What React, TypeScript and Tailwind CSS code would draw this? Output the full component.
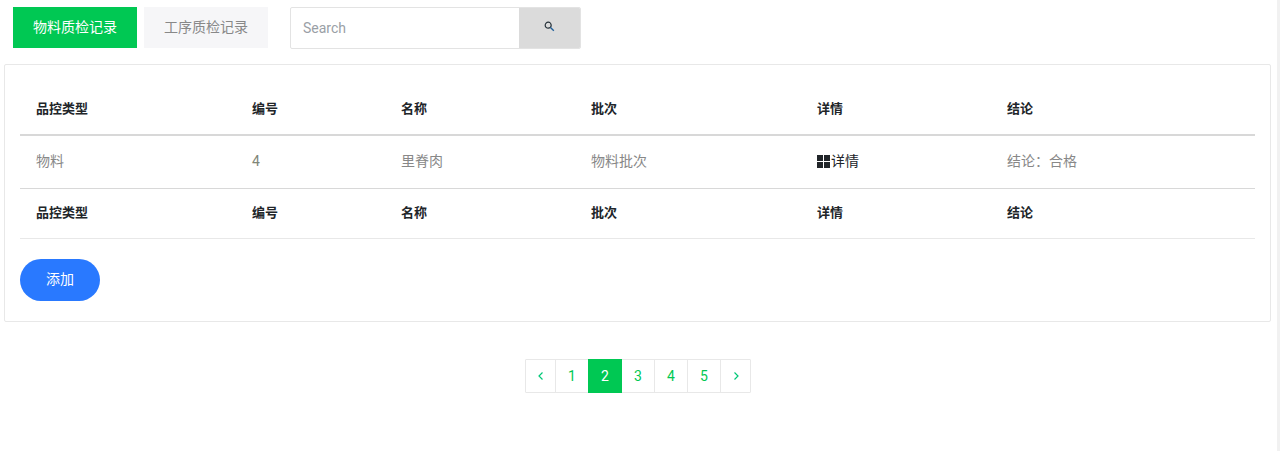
import React from "react";

const font = { fontFamily: 'Roboto, "Noto Sans CJK SC", sans-serif' };
const cols = ["w-[216px]", "w-[149px]", "w-[190px]", "w-[226px]", "w-[190px]", "w-[264px]"];
const heads = ["品控类型", "编号", "名称", "批次", "详情", "结论"];

function HeadRow({ border, height }: { border: string; height: string }) {
  return (
    <tr className={border}>
      {heads.map((h) => (
        <th key={h} className={`${height} p-0 pl-4 text-left align-middle text-[13px] font-bold text-[#212529]`}>
          {h}
        </th>
      ))}
    </tr>
  );
}

export default function App() {
  return (
    <div className="relative h-[451px] w-[1280px] overflow-hidden bg-white" style={font}>
      <div className="absolute right-0 top-0 h-full w-[3px] bg-[#f1f1f1]" />
      <div className="flex items-start pl-[13px] pt-[7px]">
        <button className="h-[41px] w-[124px] bg-[#00c853] text-[14px] text-white">物料质检记录</button>
        <button className="ml-[7px] h-[41px] w-[124px] bg-[#f6f6f8] text-[14px] text-[#888888]">工序质检记录</button>
        <div className="ml-[22px] flex h-[42px] w-[291px] overflow-hidden rounded-[2px] border border-[#e3e3e3]">
          <div className="flex flex-1 items-center pl-3 text-[14px] text-[#9aa0a6]">Search</div>
          <div className="flex w-[61px] items-center justify-center bg-[#dbdbdb] pb-[3px]">
            <svg width="11" height="11" viewBox="0 0 11 11" fill="none">
              <circle cx="4.2" cy="4.2" r="3" stroke="#27323a" strokeWidth="1.2" />
              <path d="M6.5 6.5L9.8 9.8" stroke="#1f5f9a" strokeWidth="1.4" />
            </svg>
          </div>
        </div>
      </div>

      <div className="ml-1 mt-[15px] h-[258px] w-[1267px] rounded-[2px] border border-[#e8e8e8] px-[15px] pt-[21px]">
        <table className="w-[1235px] table-fixed border-collapse">
          <colgroup>
            {cols.map((c) => (
              <col key={c} className={c} />
            ))}
          </colgroup>
          <thead>
            <HeadRow border="border-b-2 border-[#d8d8d8]" height="h-[49px] pb-[2px]" />
          </thead>
          <tbody>
            <tr className="border-b border-[#d8d8d8] text-[14px] text-[#888888]">
              <td className="h-[53px] p-0 pl-4">物料</td>
              <td className="p-0 pl-4 text-[#808678]">4</td>
              <td className="p-0 pl-4">里脊肉</td>
              <td className="p-0 pl-4">物料批次</td>
              <td className="p-0 pl-4 text-[#212529]">
                <span className="flex items-center">
                  <span className="mb-px mr-px grid h-[13px] w-[13px] grid-cols-2 grid-rows-2 gap-px">
                    <i className="bg-[#212529]" />
                    <i className="bg-[#212529]" />
                    <i className="bg-[#212529]" />
                    <i className="bg-[#212529]" />
                  </span>
                  详情
                </span>
              </td>
              <td className="p-0 pl-4">结论：合格</td>
            </tr>
          </tbody>
          <tfoot>
            <HeadRow border="border-b border-[#e8e8e8]" height="h-[50px]" />
          </tfoot>
        </table>
        <button className="mt-5 h-[42px] w-20 rounded-[21px] bg-[#2979ff] text-[14px] text-white">添加</button>
      </div>

      <div className="mt-[37px] flex justify-center pr-[4px]">
        <div className="flex h-[34px] rounded-[1px] border border-[#e8e8e8] text-[14px] text-[#00c853]">
          <span className="flex w-[30px] items-center justify-center border-r border-[#e8e8e8]">
            <svg width="8" height="10" viewBox="0 0 8 10" fill="none">
              <path d="M5.5 1.5L2 5l3.5 3.5" stroke="#00c878" strokeWidth="1.2" />
            </svg>
          </span>
          <span className="flex w-[32px] items-center justify-center">1</span>
          <span className="-my-px flex w-[34px] items-center justify-center bg-[#00c853] text-white">2</span>
          <span className="flex w-[33px] items-center justify-center border-r border-[#e8e8e8]">3</span>
          <span className="flex w-[33px] items-center justify-center border-r border-[#e8e8e8]">4</span>
          <span className="flex w-[33px] items-center justify-center border-r border-[#e8e8e8]">5</span>
          <span className="flex w-[29px] items-center justify-center">
            <svg width="8" height="10" viewBox="0 0 8 10" fill="none">
              <path d="M2.5 1.5L6 5 2.5 8.5" stroke="#00c878" strokeWidth="1.2" />
            </svg>
          </span>
        </div>
      </div>
    </div>
  );
}
